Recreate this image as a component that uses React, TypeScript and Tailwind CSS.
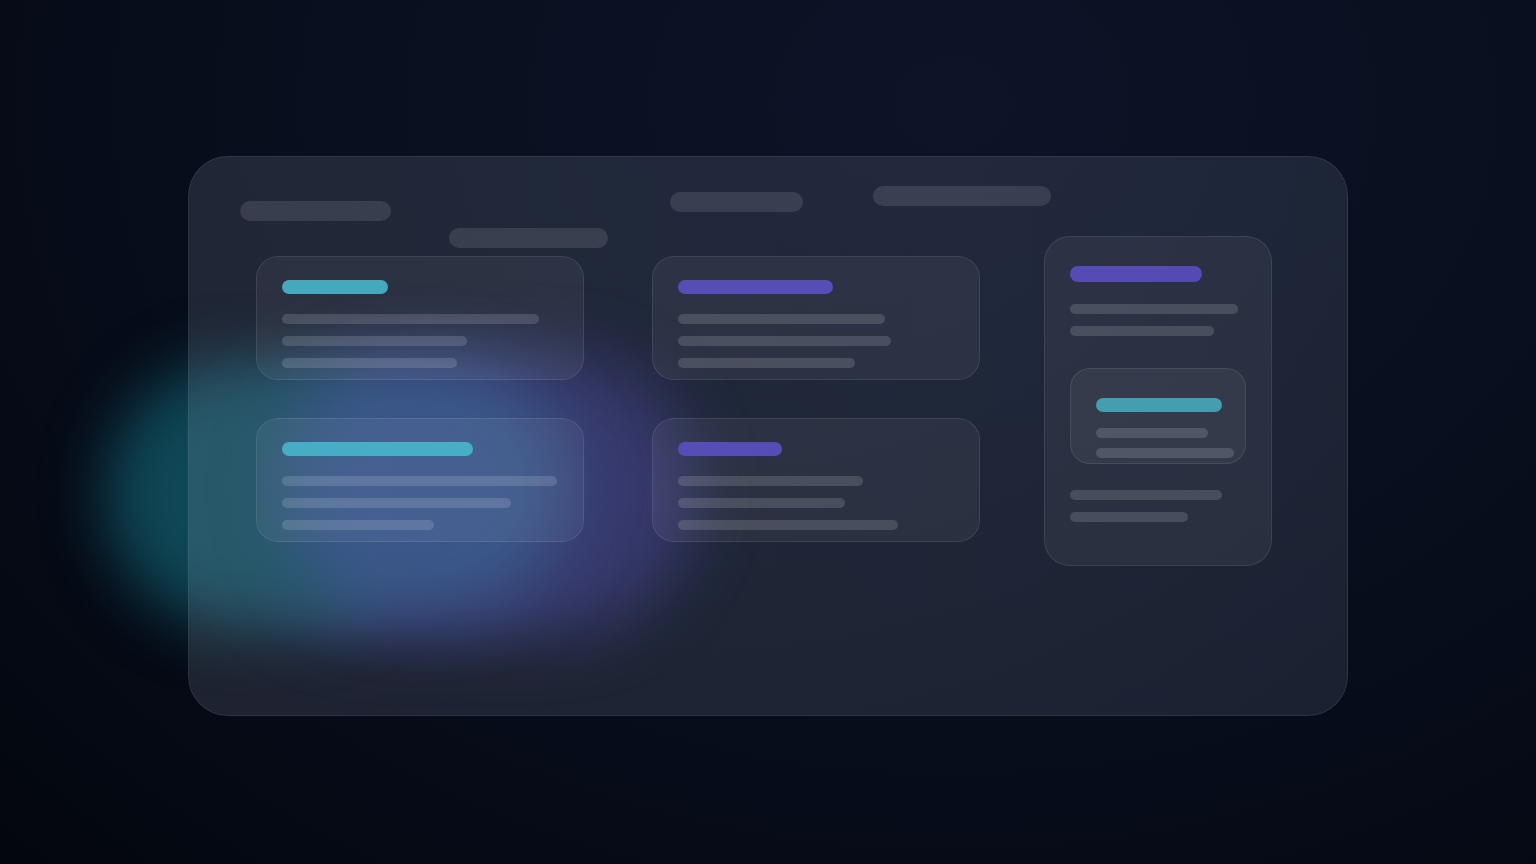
const Line = ({ w }: { w: number }) => (
  <div className="h-[10px] rounded-full bg-white/[0.14]" style={{ width: w }} />
);

const Card = ({
  accent,
  title,
  lines,
}: {
  accent: "cyan" | "violet";
  title: number;
  lines: number[];
}) => (
  <div className="h-[124px] rounded-[22px] border border-white/[0.09] bg-white/[0.055] pl-[25px] pt-[23px]">
    <div
      className={`h-[14px] rounded-full ${accent === "cyan" ? "bg-[#48b6cc]/90" : "bg-[#5b50c2]/90"}`}
      style={{ width: title }}
    />
    <div className="mt-[20px] flex flex-col gap-[12px]">
      {lines.map((w, i) => (
        <Line key={i} w={w} />
      ))}
    </div>
  </div>
);

export default function App() {
  return (
    <div className="relative h-[864px] w-full overflow-hidden bg-[radial-gradient(ellipse_at_62%_12%,#0e1428_0%,#080f1e_45%,#050a15_80%,#03060d_100%)] pt-[156px]">
      {/* glow behind the panel */}
      <div className="pointer-events-none absolute left-[230px] top-[352px] h-[285px] w-[465px] rounded-full bg-[#2a2a6a] opacity-80 blur-[32px]" />
      <div className="pointer-events-none absolute left-[105px] top-[362px] h-[265px] w-[320px] rounded-full bg-[#0f4756] blur-[30px]" />
      <div className="pointer-events-none absolute left-[280px] top-[362px] h-[250px] w-[290px] rounded-full bg-[#27467c] blur-[32px]" />

      <div className="relative mx-auto h-[560px] w-[1160px] rounded-[40px] border border-white/[0.08] bg-[linear-gradient(90deg,rgba(214,221,249,0.12),rgba(200,210,245,0.105))]">
        {/* header pills */}
        <div className="flex items-start pl-[51px] pt-[29px]">
          <div className="mt-[15px] h-[20px] w-[151px] rounded-full bg-white/[0.11]" />
          <div className="ml-[58px] mt-[42px] h-[20px] w-[159px] rounded-full bg-white/[0.11]" />
          <div className="ml-[62px] mt-[6px] h-[20px] w-[133px] rounded-full bg-white/[0.11]" />
          <div className="ml-[70px] h-[20px] w-[178px] rounded-full bg-white/[0.11]" />
        </div>

        {/* body */}
        <div className="mt-[8px] flex items-start pl-[67px]">
          <div className="grid grid-cols-[328px_328px] gap-x-[68px] gap-y-[38px]">
            <Card accent="cyan" title={106} lines={[257, 185, 175]} />
            <Card accent="violet" title={155} lines={[207, 213, 177]} />
            <Card accent="cyan" title={191} lines={[275, 229, 152]} />
            <Card accent="violet" title={104} lines={[185, 167, 220]} />
          </div>

          <div className="ml-[64px] -mt-[20px] h-[330px] w-[228px] rounded-[26px] border border-white/[0.09] bg-white/[0.055] pl-[25px] pt-[29px]">
            <div className="h-[16px] w-[132px] rounded-full bg-[#5a4ec0]/90" />
            <div className="mt-[22px] flex flex-col gap-[12px]">
              <Line w={168} />
              <Line w={144} />
            </div>
            <div className="mt-[32px] h-[96px] w-[176px] rounded-[20px] border border-white/[0.09] bg-white/[0.05] pl-[25px] pt-[29px]">
              <div className="h-[14px] w-[126px] rounded-full bg-[#46aabb]/90" />
              <div className="mt-[16px] flex flex-col gap-[10px]">
                <Line w={112} />
                <Line w={138} />
              </div>
            </div>
            <div className="mt-[26px] flex flex-col gap-[12px]">
              <Line w={152} />
              <Line w={118} />
            </div>
          </div>
        </div>
      </div>
    </div>
  );
}
